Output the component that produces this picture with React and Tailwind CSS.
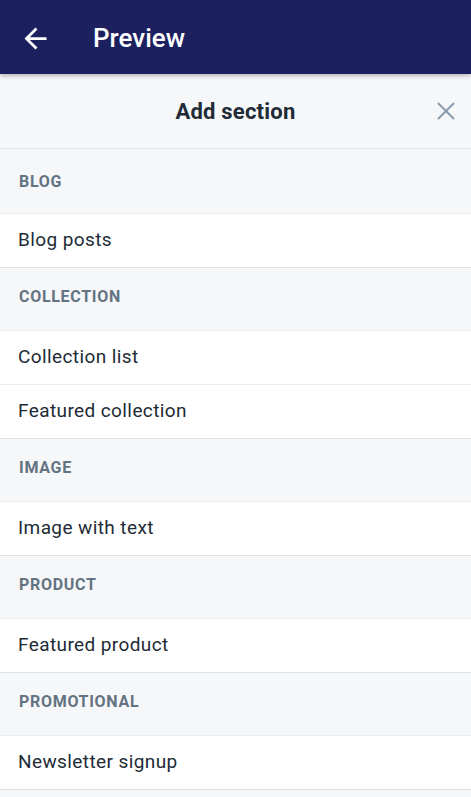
import { X } from 'lucide-react'

const groups = [
  { title: 'Blog', items: ['Blog posts'] },
  { title: 'Collection', items: ['Collection list', 'Featured collection'] },
  { title: 'Image', items: ['Image with text'] },
  { title: 'Product', items: ['Featured product'] },
  { title: 'Promotional', items: ['Newsletter signup'] },
]

export default function App() {
  return (
    <div className="min-h-[797px] bg-[#f6f7f9] font-['Roboto',sans-serif]">
      {/* Top bar */}
      <div className="relative z-10 h-[74px] bg-[#1d205f] flex items-center shadow-[0_2px_4px_rgba(0,0,0,0.25)]">
        <svg viewBox="0 0 24 24" className="ml-[19px] mt-[2px] h-[33px] w-[33px] fill-white">
          <path d="M20 11H7.83l5.59-5.59L12 4l-8 8 8 8 1.41-1.41L7.83 13H20v-2z" />
        </svg>
        <h1 className="ml-[41px] mt-[2px] text-[26px] font-medium text-white">Preview</h1>
      </div>

      {/* Sheet header */}
      <div className="relative h-[75px] flex items-center justify-center border-b border-[#e1e3e5]">
        <h2 className="text-[22px] font-bold tracking-[0.2px] text-[#212b36]">Add section</h2>
        <button className="absolute right-[10px] top-1/2 -translate-y-1/2">
          <X className="h-[30px] w-[30px] text-[#8a9bac]" strokeWidth={1.6} />
        </button>
      </div>

      {groups.map((group, i) => (
        <div key={group.title}>
          <div className={`flex items-center px-[19px] ${i === 0 ? 'h-[65px]' : 'h-[63px] pb-[6px]'}`}>
            <span className="text-[16px] font-bold uppercase tracking-[0.7px] text-[#637381]">{group.title}</span>
          </div>
          {group.items.map((item) => (
            <div
              key={item}
              className="h-[54px] flex items-center px-[18px] bg-white border-b border-[#e0e2e5] shadow-[0_-1px_0_#eceef0]"
            >
              <span className="text-[19px] tracking-[0.4px] text-[#212b36]">{item}</span>
            </div>
          ))}
        </div>
      ))}
    </div>
  )
}
